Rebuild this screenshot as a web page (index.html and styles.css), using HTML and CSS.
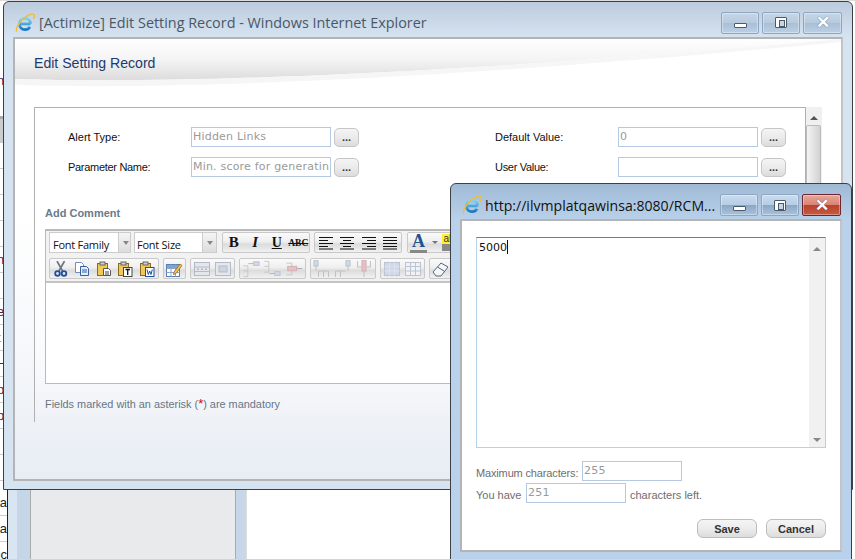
FILE: index.html
```html
<!DOCTYPE html>
<html lang="en">
<head>
    <meta charset="UTF-8">
    <title>[Actimize] Edit Setting Record</title>
    <link rel="stylesheet" href="styles.css">
</head>
<body>
    <svg class="defs" width="0" height="0">
        <defs>
            <linearGradient id="eBlue" x1="0" y1="0" x2="0" y2="1">
                <stop offset="0" stop-color="#7fd6f4"/>
                <stop offset="1" stop-color="#1a78c2"/>
            </linearGradient>
            <linearGradient id="swoosh" x1="0" y1="0" x2="0" y2="1">
                <stop offset="0" stop-color="#fefefe"/>
                <stop offset="0.5" stop-color="#f4f4f4"/>
                <stop offset="1" stop-color="#dcdcdc"/>
            </linearGradient>
            <symbol id="ie" viewBox="0 0 20 20">
                <path d="M4.500 10.800h11M15.500 10.800c0-3.300-2.300-5.500-5.500-5.500s-5.500 2.500-5.500 5.700 2.300 5.600 5.500 5.600c2.300 0 4-1 4.900-2.800" fill="none" stroke="url(#eBlue)" stroke-width="2.700"/>
                <path d="M1.800 18.500C.2 16.600 3 11 7.500 6.500 12 2.200 17 .2 18.700 1.500c1 .8.700 2.600-.5 4.500" fill="none" stroke="#f1bc3a" stroke-width="1.400"/>
            </symbol>
            <symbol id="left" viewBox="0 0 16 14"><path d="M1 1.500h14M1 4.500h9M1 7.500h14M1 10.500h9M1 13h14" stroke="#111" fill="none"/></symbol>
            <symbol id="center" viewBox="0 0 16 14"><path d="M1 1.500h14M4 4.500h8M1 7.500h14M4 10.500h8M1 13h14" stroke="#111" fill="none"/></symbol>
            <symbol id="right" viewBox="0 0 16 14"><path d="M1 1.500h14M6 4.500h9M1 7.500h14M6 10.500h9M1 13h14" stroke="#111" fill="none"/></symbol>
            <symbol id="full" viewBox="0 0 16 14"><path d="M1 1.500h14M1 4.500h14M1 7.500h14M1 10.500h14M1 13h14" stroke="#111" fill="none"/></symbol>
            <symbol id="cut" viewBox="0 0 16 16">
                <path d="M4 0l5.500 10M11.500 0L6 10" stroke="#6f7680" stroke-width="1.700" fill="none"/>
                <circle cx="4.500" cy="12.500" r="2.300" fill="none" stroke="#1d4fa0" stroke-width="1.800"/>
                <circle cx="11" cy="12.500" r="2.300" fill="none" stroke="#1d4fa0" stroke-width="1.800"/>
            </symbol>
            <symbol id="copy" viewBox="0 0 16 16">
                <path d="M1.500 1.500h6l2 2v8h-8z" fill="#fff" stroke="#6e8fc0"/>
                <path d="M6.500 5.500h6l2 2v7h-8z" fill="#e4eefb" stroke="#33609f"/>
                <path d="M8 9h5M8 11h5" stroke="#33609f"/>
            </symbol>
            <symbol id="paste" viewBox="0 0 16 16">
                <rect x="1.500" y="2.500" width="10" height="12" fill="#efc95a" stroke="#8a6a20"/>
                <rect x="4" y="1" width="5" height="3" fill="#cfcfcf" stroke="#666"/>
                <path d="M7.500 7.500h5l2 2v5h-7z" fill="#fff" stroke="#555"/>
                <path d="M9 11h4M9 13h4" stroke="#444"/>
            </symbol>
            <symbol id="pasteT" viewBox="0 0 16 16">
                <rect x="1.500" y="2.500" width="10" height="12" fill="#efc95a" stroke="#8a6a20"/>
                <rect x="4" y="1" width="5" height="3" fill="#cfcfcf" stroke="#666"/>
                <rect x="6.500" y="6.500" width="8.500" height="9" fill="#fff" stroke="#444"/>
                <path d="M8.500 8.500h4.500M10.700 8.500v5.500" stroke="#111" stroke-width="1.300"/>
            </symbol>
            <symbol id="pasteW" viewBox="0 0 16 16">
                <rect x="1.500" y="2.500" width="10" height="12" fill="#efc95a" stroke="#8a6a20"/>
                <rect x="4" y="1" width="5" height="3" fill="#cfcfcf" stroke="#666"/>
                <rect x="6.500" y="6.500" width="8.500" height="9" fill="#fff" stroke="#1d4fa0"/>
                <path d="M8 8.500l1.300 5 1.400-3.500 1.300 3.500 1.300-5" stroke="#1d4fa0" fill="none"/>
            </symbol>
            <symbol id="tableEdit" viewBox="0 0 18 18">
                <rect x="1.500" y="4.500" width="13" height="12" fill="#fff" stroke="#5b7fb0"/>
                <path d="M1.500 8.500h13M1.500 12.500h13M6 4.500v12M10.500 4.500v12" stroke="#8aa5cc"/>
                <rect x="2" y="5" width="12" height="3" fill="#7da3d6"/>
                <path d="M9 12l6-8 2 1.500-6 8-2.500 1z" fill="#f2c24a" stroke="#8a5a10" stroke-width=".7"/>
            </symbol>
            <symbol id="rowsOff" viewBox="0 0 16 14">
                <rect x=".5" y=".5" width="15" height="13" fill="#e4e7ec" stroke="#b3bbc8"/>
                <path d="M.5 5h15M.5 9.500h15" stroke="#b3bbc8"/>
                <path d="M3 7.200h2M7 7.200h2M11 7.200h2" stroke="#9aa6b8"/>
            </symbol>
            <symbol id="colsOff" viewBox="0 0 16 14">
                <rect x=".5" y=".5" width="15" height="13" fill="#e4e7ec" stroke="#b3bbc8"/>
                <rect x="4" y="4" width="8" height="6" fill="#ced5e0" stroke="#b3bbc8"/>
            </symbol>
            <symbol id="insA" viewBox="0 0 20 18">
                <path d="M1.500 5.500h5v12h-5M1.500 11h5" fill="none" stroke="#c4c4c4"/>
                <path d="M7 3h6" stroke="#b5b5b5"/>
                <rect x="13" y="1" width="6" height="4" fill="#d2dae5" stroke="#b8c0cc"/>
            </symbol>
            <symbol id="insB" viewBox="0 0 20 18">
                <path d="M1.500 .5h5v12h-5M1.500 6h5" fill="none" stroke="#c4c4c4"/>
                <path d="M7 14h6" stroke="#b5b5b5"/>
                <rect x="13" y="12" width="6" height="4" fill="#d2dae5" stroke="#b8c0cc"/>
            </symbol>
            <symbol id="insC" viewBox="0 0 20 18">
                <path d="M1.500 2.500h6v13h-6" fill="none" stroke="#c4c4c4"/>
                <rect x="3" y="6" width="10" height="5" fill="#e8c0c4" stroke="#d0aeb2"/>
                <path d="M13 8.500h6" stroke="#a5a5a5"/>
            </symbol>
            <symbol id="colA" viewBox="0 0 18 18">
                <rect x="2" y="0" width="4" height="6" fill="#d2dae5" stroke="#b8c0cc"/>
                <path d="M4 6v5M6.500 17v-6h5v6M11.500 17v-6h5v6" fill="none" stroke="#c0c0c0"/>
            </symbol>
            <symbol id="colB" viewBox="0 0 18 18">
                <rect x="12" y="0" width="4" height="6" fill="#d2dae5" stroke="#b8c0cc"/>
                <path d="M14 6v5M1.500 17v-6h5v6M6.500 17v-6h5" fill="none" stroke="#c0c0c0"/>
            </symbol>
            <symbol id="colC" viewBox="0 0 18 18">
                <rect x="7" y="0" width="4" height="11" fill="#e8c0c4" stroke="#d0aeb2"/>
                <path d="M9 11v6M2.500 1v6h4M15.500 1v6h-4" fill="none" stroke="#c0c0c0"/>
            </symbol>
            <symbol id="gridA" viewBox="0 0 16 16">
                <rect x=".5" y="1.500" width="15" height="13" fill="#cfd9e8" stroke="#bac4d2"/>
                <path d="M.5 5.500h15M.5 10h15M5.500 1.500v13M10.500 1.500v13" stroke="#dce3ed"/>
            </symbol>
            <symbol id="gridB" viewBox="0 0 16 16">
                <rect x=".5" y="1.500" width="15" height="13" fill="#f0f2f6" stroke="#bac4d2"/>
                <path d="M.5 5.500h15M.5 10h15M5.500 1.500v13M10.500 1.500v13" stroke="#bac4d2"/>
            </symbol>
            <symbol id="eraser" viewBox="0 0 18 16">
                <path d="M1 11l8-9 7 4-7 9H4z" fill="#f4f6fa" stroke="#55677f"/>
                <path d="M5.500 6l6.500 4" stroke="#55677f"/>
            </symbol>
        </defs>
    </svg>

    <!-- page behind the windows -->
    <div class="backdrop">
        <div class="top-strip"></div>
        <div class="side-list">
            <div class="side-row side-row-top"><span>n</span></div>
            <div class="side-row side-row-dark"></div>
            <div class="side-row"></div>
            <div class="side-row"></div>
            <div class="side-row"></div>
            <div class="side-row"><span>l</span></div>
            <div class="side-row"><span>n</span></div>
            <div class="side-row"></div>
            <div class="side-row"><span>e</span></div>
            <div class="side-row"><span>t</span></div>
            <div class="side-row"><span>H</span></div>
            <div class="side-row"><span>p</span></div>
            <div class="side-row"><span>p</span></div>
            <div class="side-row"></div>
            <div class="side-row"></div>
        </div>
        <div class="under-window">
            <div class="under-list">
                <div class="under-row">a</div>
                <div class="under-row">a</div>
                <div class="under-row">nc</div>
            </div>
            <div class="under-rail"></div>
            <div class="under-panel"></div>
            <div class="under-rail under-rail-right"></div>
        </div>
    </div>

    <!-- main window -->
    <div class="win win-main">
        <div class="titlebar">
            <svg class="ie-icon"><use href="#ie"/></svg>
            <span class="win-title">[Actimize] Edit Setting Record - Windows Internet Explorer</span>
            <div class="controls">
                <div class="ctl"><i class="ico-min"></i></div>
                <div class="ctl"><i class="ico-max"></i></div>
                <div class="ctl ctl-x">&#10005;</div>
            </div>
        </div>
        <div class="client client-main">
            <div class="page-head">
                <svg class="wave" viewBox="0 0 828 68" preserveAspectRatio="none">
                    <path d="M0 40C200 46 500 30 828 0H0z" fill="url(#swoosh)"/>
                    <path d="M0 40C200 46 500 30 828 0V3C500 34 200 52 0 46z" fill="#f6f6f6"/>
                </svg>
                <h1>Edit Setting Record</h1>
            </div>
            <div class="section-wrap">
                <div class="section">
                    <div class="field-row">
                        <div class="field">
                            <label>Alert Type:</label>
                            <input class="txt" type="text" value="Hidden Links" readonly>
                            <button class="dots">...</button>
                        </div>
                        <div class="field field-right">
                            <label>Default Value:</label>
                            <input class="txt" type="text" value="0" readonly>
                            <button class="dots">...</button>
                        </div>
                    </div>
                    <div class="field-row">
                        <div class="field">
                            <label class="label-tight">Parameter Name:</label>
                            <input class="txt" type="text" value="Min. score for generating alerts" readonly>
                            <button class="dots">...</button>
                        </div>
                        <div class="field field-right">
                            <label class="label-tight">User Value:</label>
                            <input class="txt" type="text" readonly>
                            <button class="dots">...</button>
                        </div>
                    </div>

                    <h2>Add Comment</h2>
                    <div class="editor">
                        <div class="toolbar">
                            <div class="tb-row">
                                <div class="tb-select tb-select-a">Font Family</div>
                                <div class="tb-arrow tb-arrow-a"></div>
                                <div class="tb-select tb-select-b">Font Size</div>
                                <div class="tb-arrow"></div>
                                <div class="tb-group tb-group-first">
                                    <span class="tb-btn fmt">B</span>
                                    <span class="tb-btn fmt fmt-i">I</span>
                                    <span class="tb-btn fmt fmt-u">U</span>
                                    <span class="tb-btn fmt fmt-s">ABC</span>
                                </div>
                                <div class="tb-group">
                                    <span class="tb-btn"><svg class="al"><use href="#left"/></svg></span>
                                    <span class="tb-btn"><svg class="al"><use href="#center"/></svg></span>
                                    <span class="tb-btn"><svg class="al"><use href="#right"/></svg></span>
                                    <span class="tb-btn"><svg class="al"><use href="#full"/></svg></span>
                                </div>
                                <div class="tb-group tb-group-color">
                                    <span class="tb-btn color-a">A</span>
                                    <span class="tb-drop"></span>
                                    <span class="tb-btn color-b">ab</span>
                                </div>
                            </div>
                            <div class="tb-row tb-row-2">
                                <div class="tb-group">
                                    <span class="tb-btn"><svg class="ic"><use href="#cut"/></svg></span>
                                    <span class="tb-btn"><svg class="ic"><use href="#copy"/></svg></span>
                                    <span class="tb-btn"><svg class="ic"><use href="#paste"/></svg></span>
                                    <span class="tb-btn"><svg class="ic"><use href="#pasteT"/></svg></span>
                                    <span class="tb-btn"><svg class="ic"><use href="#pasteW"/></svg></span>
                                </div>
                                <div class="tb-group">
                                    <span class="tb-btn"><svg class="ic ic-lg"><use href="#tableEdit"/></svg></span>
                                </div>
                                <div class="tb-group">
                                    <span class="tb-btn"><svg class="ic"><use href="#rowsOff"/></svg></span>
                                    <span class="tb-btn"><svg class="ic"><use href="#colsOff"/></svg></span>
                                </div>
                                <div class="tb-group">
                                    <span class="tb-btn"><svg class="ic ic-lg"><use href="#insA"/></svg></span>
                                    <span class="tb-btn"><svg class="ic ic-lg"><use href="#insB"/></svg></span>
                                    <span class="tb-btn"><svg class="ic ic-lg"><use href="#insC"/></svg></span>
                                </div>
                                <div class="tb-group">
                                    <span class="tb-btn"><svg class="ic ic-lg"><use href="#colA"/></svg></span>
                                    <span class="tb-btn"><svg class="ic ic-lg"><use href="#colB"/></svg></span>
                                    <span class="tb-btn"><svg class="ic ic-lg"><use href="#colC"/></svg></span>
                                </div>
                                <div class="tb-group">
                                    <span class="tb-btn"><svg class="ic"><use href="#gridA"/></svg></span>
                                    <span class="tb-btn"><svg class="ic"><use href="#gridB"/></svg></span>
                                </div>
                                <div class="tb-group">
                                    <span class="tb-btn"><svg class="ic ic-lg"><use href="#eraser"/></svg></span>
                                </div>
                            </div>
                        </div>
                        <div class="editor-body"></div>
                    </div>
                    <p class="note">Fields marked with an asterisk (<em>*</em>) are mandatory</p>
                </div>
                <div class="scrollbar-main">
                    <div class="sb-up"></div>
                    <div class="sb-thumb"></div>
                </div>
            </div>
        </div>
    </div>

    <!-- comment popup -->
    <div class="win win-popup">
        <div class="titlebar titlebar-popup">
            <svg class="ie-icon"><use href="#ie"/></svg>
            <span class="win-title win-title-popup">http://ilvmplatqawinsa:8080/RCM...</span>
            <div class="controls">
                <div class="ctl ctl-popup"><i class="ico-min"></i></div>
                <div class="ctl ctl-popup"><i class="ico-max"></i></div>
                <div class="ctl ctl-popup ctl-x ctl-close">&#10005;</div>
            </div>
        </div>
        <div class="client client-popup">
            <div class="comment-box">
                <div class="comment-text">5000<span class="caret"></span></div>
                <div class="comment-scroll">
                    <div class="sb-up"></div>
                    <div class="sb-down"></div>
                </div>
            </div>
            <div class="count-row count-row-first">
                <span class="count-label count-label-max">Maximum characters:</span>
                <input class="txt txt-count" type="text" value="255" readonly>
            </div>
            <div class="count-row">
                <span class="count-label count-label-have">You have</span>
                <input class="txt txt-count" type="text" value="251" readonly>
                <span class="count-tail">characters left.</span>
            </div>
            <div class="actions">
                <button class="action">Save</button>
                <button class="action">Cancel</button>
            </div>
        </div>
    </div>
</body>
</html>
```

FILE: styles.css
```css
* {
    margin: 0;
    padding: 0;
    box-sizing: border-box;
}

html, body {
    width: 855px;
    height: 559px;
    overflow: hidden;
}

body {
    position: relative;
    background: #fff;
    font-family: "Liberation Sans", Arial, sans-serif;
}

.defs {
    position: absolute;
}

/* backdrop */
.backdrop {
    position: absolute;
    inset: 0;
}

.top-strip {
    height: 1px;
    background: #ddd;
}

.side-list {
    width: 3px;
    height: 489px;
    overflow: hidden;
}

.side-row {
    height: 26px;
    border-bottom: 1px solid #ccc;
    font-size: 13px;
    line-height: 25px;
    color: #523;
    white-space: nowrap;
}

.side-row span {
    margin-left: -3px;
}

.side-row-top {
    height: 115px;
    padding-top: 67px;
    border-bottom: none;
}

.side-row-dark {
    height: 27px;
    background: #c9ccd0;
    border-top: 3px solid #aaa;
}

.under-window {
    display: flex;
    height: 69px;
}

.under-list {
    width: 8px;
    border-right: 1px solid #222;
    overflow: hidden;
}

.under-row {
    height: 26px;
    border-bottom: 1px solid #ccc;
    font-size: 13px;
    line-height: 26px;
    color: #222;
    white-space: nowrap;
    direction: rtl;
}

.under-rail {
    width: 23px;
    background: linear-gradient(to right, #d9e6f2 40%, #c5d6e8 40%);
    border-right: 1px solid #aaa;
}

.under-rail-right {
    width: 12px;
    background: #c7d7e7;
    border-left: 1px solid #aaa;
    border-right: 1px solid #ddd;
}

.under-panel {
    width: 204px;
    background: #e9eaec;
}

/* windows */
.win {
    position: absolute;
    border: 1px solid #3c3f44;
    border-radius: 6px 6px 0 0;
}

.win-main {
    left: 3px;
    top: 1px;
    width: 850px;
    height: 489px;
    background: linear-gradient(to bottom, #bccbdc 0, #d6e4f2 36px, #d6e4f2 100%);
    padding: 0 9px;
}

.win-popup {
    left: 450px;
    top: 183px;
    width: 402px;
    height: 380px;
    background: linear-gradient(to bottom, #a0bad6 0, #b9d1ea 36px);
    padding: 0 9px;
}

.titlebar {
    display: flex;
    align-items: center;
    height: 35px;
    padding-top: 6px;
}

.ie-icon {
    width: 20px;
    height: 20px;
    flex: none;
    margin-left: 2px;
}

.win-title {
    margin-left: 4px;
    font-family: "Open Sans", sans-serif;
    font-size: 14.4px;
    color: #4a5766;
    white-space: nowrap;
}

.win-title-popup {
    margin-left: 3px;
    font-size: 14.1px;
    color: #111;
}

.titlebar-popup {
    padding-top: 7px;
}

.controls {
    display: flex;
    gap: 3px;
    margin-left: auto;
    margin-right: 1px;
}

.ctl {
    display: flex;
    align-items: center;
    justify-content: center;
    width: 38px;
    height: 22px;
    border: 1px solid #8ea6bf;
    border-radius: 2px;
    background: linear-gradient(to bottom, #c6d6e6 0, #b7cade 50%, #a9bfd6 51%, #bcd0e4 100%);
    box-shadow: inset 0 0 0 1px rgba(255,255,255,0.35);
    color: #fff;
}

.ctl-popup {
    background: linear-gradient(to bottom, #c9dcef 0, #b5cde6 50%, #8ca7c4 51%, #a9c2dc 100%);
}

.ctl-x {
    width: 39px;
    font-size: 17px;
    font-weight: bold;
    text-shadow: 0 0 1px #3a4a5c;
}

.ctl-close {
    border-color: #6d2630;
    background: linear-gradient(to bottom, #e8a79c 0, #d98273 50%, #b9412a 51%, #c65a42 100%);
    text-shadow: 0 0 1px #5a1510;
}

.ico-min {
    display: block;
    width: 13px;
    height: 5px;
    margin-top: 6px;
    background: #fff;
    border: 1px solid #4b5a6b;
    border-radius: 1px;
}

.ico-max {
    display: block;
    width: 12px;
    height: 11px;
    background: #fff;
    border: 1px solid #4b5a6b;
    border-radius: 1px;
    position: relative;
}

.ico-max::after {
    content: "";
    position: absolute;
    left: 3px;
    top: 2px;
    width: 4px;
    height: 5px;
    background: #c6d6e6;
    border: 1px solid #4b5a6b;
}

.client {
    border: 2px solid #b4b4b4;
    border-right-color: #c4c4c4;
}

.client-main {
    height: 444px;
    background: linear-gradient(to bottom, #fff 40%, #f6f8fb 70%, #e8edf4 100%);
    overflow: hidden;
}

/* page header */
.page-head {
    position: relative;
    height: 68px;
}

.wave {
    position: absolute;
    left: 0;
    top: 0;
    width: 100%;
    height: 68px;
}

.page-head h1 {
    position: relative;
    padding: 16px 0 0 19px;
    font-size: 14.1px;
    font-weight: normal;
    line-height: 17px;
    color: #1b3a6f;
}

/* section */
.section-wrap {
    display: flex;
    align-items: flex-start;
    padding-left: 19px;
}

.section {
    width: 772px;
    height: 315px;
    border: 1px solid #b0b0b0;
    border-bottom: none;
    padding-top: 19px;
    background: linear-gradient(to bottom, #fff 50%, rgba(255,255,255,0));
    overflow: hidden;
}

.field-row {
    display: flex;
    height: 20px;
    margin-bottom: 10px;
    padding-left: 33px;
}

.field {
    display: flex;
    align-items: center;
    width: 427px;
}

.field-right {
    width: auto;
}

.field label {
    width: 123px;
    font-size: 11px;
    color: #111;
}

.field .label-tight {
    letter-spacing: -0.3px;
}

.txt {
    width: 140px;
    height: 20px;
    padding: 0 1px 2px;
    border: 1px solid #b6c9e2;
    border-radius: 0;
    outline: none;
    background: #fff;
    font-family: "DejaVu Sans", sans-serif;
    font-size: 11px;
    letter-spacing: 0.2px;
    color: #9a9a9a;
}

.dots {
    width: 25px;
    height: 19px;
    margin-left: 3px;
    border: 1px solid #c6c6c6;
    border-radius: 5px;
    background: linear-gradient(to bottom, #f4f4f4 0, #ebebeb 50%, #dcdcdc 100%);
    font-size: 11px;
    font-weight: bold;
    line-height: 13px;
    color: #333;
}

.section h2 {
    margin: 30px 0 0 10px;
    height: 22px;
    font-size: 11px;
    line-height: 13px;
    color: #6c7a8a;
}

/* rich text editor */
.editor {
    width: 745px;
    margin-left: 10px;
    border: 1px solid #b9b9b9;
    border-top-width: 2px;
}

.toolbar {
    height: 52px;
    padding: 1px 3px 0;
    background: #f2f2f2;
    border-bottom: 2px solid #c4c4c4;
}

.tb-row {
    display: flex;
    height: 21px;
    gap: 4px;
}

.tb-row-2 {
    margin-top: 5px;
}

.tb-select {
    width: 70px;
    height: 21px;
    padding-left: 3px;
    border: 1px solid #ccc;
    background: #fff;
    font-family: "Open Sans", sans-serif;
    font-size: 11px;
    letter-spacing: -0.25px;
    line-height: 23px;
    color: #111;
}

.tb-select-b {
    width: 69px;
    padding-left: 2px;
}

.tb-arrow {
    position: relative;
    width: 14px;
    height: 21px;
    margin-left: -4px;
    border: 1px solid #ccc;
    border-left: none;
    background: linear-gradient(to bottom, #f5f5f5, #dcdcdc);
}

.tb-arrow::after {
    content: "";
    position: absolute;
    left: 4px;
    top: 8px;
    border: 3px solid transparent;
    border-top: 4px solid #888;
}

.tb-arrow-a {
    width: 12px;
    margin-right: -1px;
}

.tb-group {
    display: flex;
    align-items: center;
    height: 21px;
    border: 1px solid #c9c9c9;
    border-radius: 2px;
    background: linear-gradient(to bottom, #fafafa 0, #efefef 45%, #dcdcdc 60%, #f1f1f1 100%);
    flex: none;
}

.tb-group-first {
    margin-left: 1px;
}

.tb-group-color {
    margin-left: 1px;
}

.tb-btn {
    display: flex;
    align-items: center;
    justify-content: center;
    width: 21.5px;
    height: 19px;
}

.fmt {
    font-family: "Liberation Serif", serif;
    font-size: 15px;
    font-weight: bold;
    color: #111;
}

.fmt-i {
    font-style: italic;
}

.fmt-u {
    text-decoration: underline;
    font-size: 14px;
}

.fmt-s {
    font-size: 9.5px;
    text-decoration: line-through;
}

.al {
    width: 16px;
    height: 14px;
}

.ic {
    width: 16px;
    height: 16px;
}

.ic-lg {
    width: 18px;
    height: 18px;
}

.color-a {
    flex-direction: column;
    height: 20px;
    border-bottom: 3px solid #888;
    width: 17px;
    margin-left: 2px;
    font-family: "Liberation Serif", serif;
    font-size: 18px;
    font-weight: bold;
    line-height: 15px;
    color: #23508f;
}

.tb-drop {
    width: 0;
    height: 0;
    margin: 3px 4px 0 5px;
    border: 3px solid transparent;
    border-top: 3px solid #777;
}

.color-b {
    width: 14px;
    height: 17px;
    background: linear-gradient(to bottom, #ffef3a 0, #ffef3a 60%, #888 60%);
    font-family: "Liberation Sans", sans-serif;
    font-size: 10px;
    line-height: 10px;
    align-items: flex-start;
    color: #333;
    margin-right: 40px;
}

.editor-body {
    height: 100px;
    background: #fff;
}

.note {
    margin: 13px 0 0 10px;
    font-size: 10.9px;
    line-height: 14px;
    color: #6a7484;
}

.note em {
    font-style: normal;
    font-size: 13px;
    line-height: 10px;
    color: #e2001a;
}

/* scrollbars */
.scrollbar-main {
    width: 16px;
    height: 130px;
    background: #f0f0f0;
}

.sb-up {
    position: relative;
    height: 18px;
}

.sb-up::after {
    content: "";
    position: absolute;
    left: 4px;
    top: 5px;
    border: 4px solid transparent;
    border-bottom: 4px solid #555;
}

.sb-thumb {
    width: 15px;
    height: 112px;
    border: 1px solid #bbb;
    border-radius: 2px;
    background: linear-gradient(to right, #f4f4f4, #d2d2d2);
}

/* popup */
.client-popup {
    height: 333px;
    padding: 16px 14px 0;
    background: #fff;
}

.comment-box {
    display: flex;
    justify-content: space-between;
    width: 350px;
    height: 211px;
    border: 1px solid #b6d0e9;
    border-top-color: #4d88b5;
}

.comment-text {
    padding: 2px;
    font-family: "DejaVu Sans", sans-serif;
    font-size: 11px;
    line-height: 13px;
    color: #111;
}

.caret {
    display: inline-block;
    width: 1px;
    height: 14px;
    background: #111;
    vertical-align: -3px;
}

.comment-scroll {
    display: flex;
    flex-direction: column;
    justify-content: space-between;
    width: 16px;
    background: #f1f1f1;
}

.comment-scroll .sb-up::after {
    border-bottom-color: #888;
    left: 4px;
}

.sb-down {
    position: relative;
    height: 16px;
}

.sb-down::after {
    content: "";
    position: absolute;
    left: 4px;
    top: 7px;
    border: 4px solid transparent;
    border-top: 4px solid #888;
}

.count-row {
    display: flex;
    align-items: center;
    height: 20px;
    margin-top: 2px;
    font-size: 11px;
    color: #6e6e6e;
}

.count-row-first {
    margin-top: 13px;
}

.count-row span {
    padding-top: 4px;
}

.count-label-max {
    width: 106px;
    letter-spacing: -0.15px;
}

.count-label-have {
    width: 50px;
}

.txt-count {
    width: 100px;
}

.count-tail {
    margin-left: 4px;
}

.actions {
    display: flex;
    justify-content: flex-end;
    gap: 9px;
    width: 350px;
    margin-top: 16px;
}

.action {
    width: 60px;
    height: 19px;
    border: 1px solid #bdbdbd;
    border-radius: 6px;
    background: linear-gradient(to bottom, #f5f5f5 0, #ececec 50%, #dcdcdc 100%);
    font-family: "Liberation Sans", sans-serif;
    font-size: 11px;
    font-weight: bold;
    color: #333;
}
```
